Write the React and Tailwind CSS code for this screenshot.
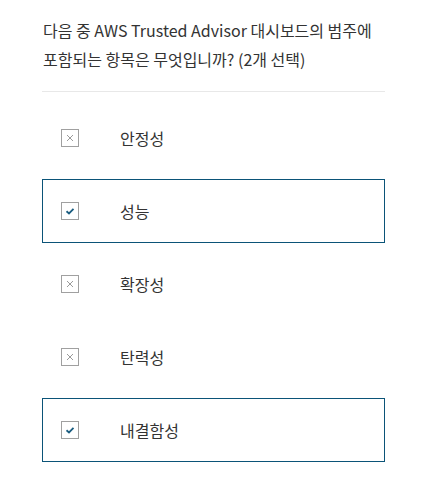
import { useState } from 'react';

const options = [
  { id: 'a', label: '안정성', checked: false },
  { id: 'b', label: '성능', checked: true },
  { id: 'c', label: '확장성', checked: false },
  { id: 'd', label: '탄력성', checked: false },
  { id: 'e', label: '내결함성', checked: true },
];

function Mark({ checked }) {
  return (
    <span className="w-[18px] h-[18px] border border-[#a0a0a0] bg-white flex items-center justify-center shrink-0">
      {checked ? (
        <svg width="10" height="10" viewBox="0 0 10 10">
          <path d="M1.5 5.2 L4 7.4 L8.5 2.8" fill="none" stroke="#1b5d80" strokeWidth="1.8" />
        </svg>
      ) : (
        <svg width="10" height="10" viewBox="0 0 10 10">
          <path d="M2 2 L8 8 M8 2 L2 8" fill="none" stroke="#9a9a9a" strokeWidth="1" />
        </svg>
      )}
    </span>
  );
}

export default function App() {
  const [items, setItems] = useState(options);

  const toggle = (id) => {
    setItems((prev) => prev.map((o) => (o.id === id ? { ...o, checked: !o.checked } : o)));
  };

  return (
    <div
      className="bg-white min-h-[477px] pl-[42px] pr-[39px] pt-[16px] text-[#333]"
      style={{ fontFamily: '"Noto Sans CJK KR", "Noto Sans", sans-serif' }}
    >
      {/* Question */}
      <p className="text-[16px] leading-[29px] pl-[1px] pb-[17px] break-keep border-b border-[#e8e8e8]">
        다음 중 AWS Trusted Advisor 대시보드의 범주에 포함되는 항목은 무엇입니까? (2개 선택)
      </p>

      {/* Options */}
      <div className="flex flex-col gap-[9px] pt-[14px]">
        {items.map((o) => (
          <button
            key={o.id}
            onClick={() => toggle(o.id)}
            className={`h-[64px] flex items-center pl-[18px] text-left border ${
              o.checked ? 'border-[#0b5478]' : 'border-transparent'
            }`}
          >
            <Mark checked={o.checked} />
            <span className="ml-[41px] text-[16px]">{o.label}</span>
          </button>
        ))}
      </div>
    </div>
  );
}
